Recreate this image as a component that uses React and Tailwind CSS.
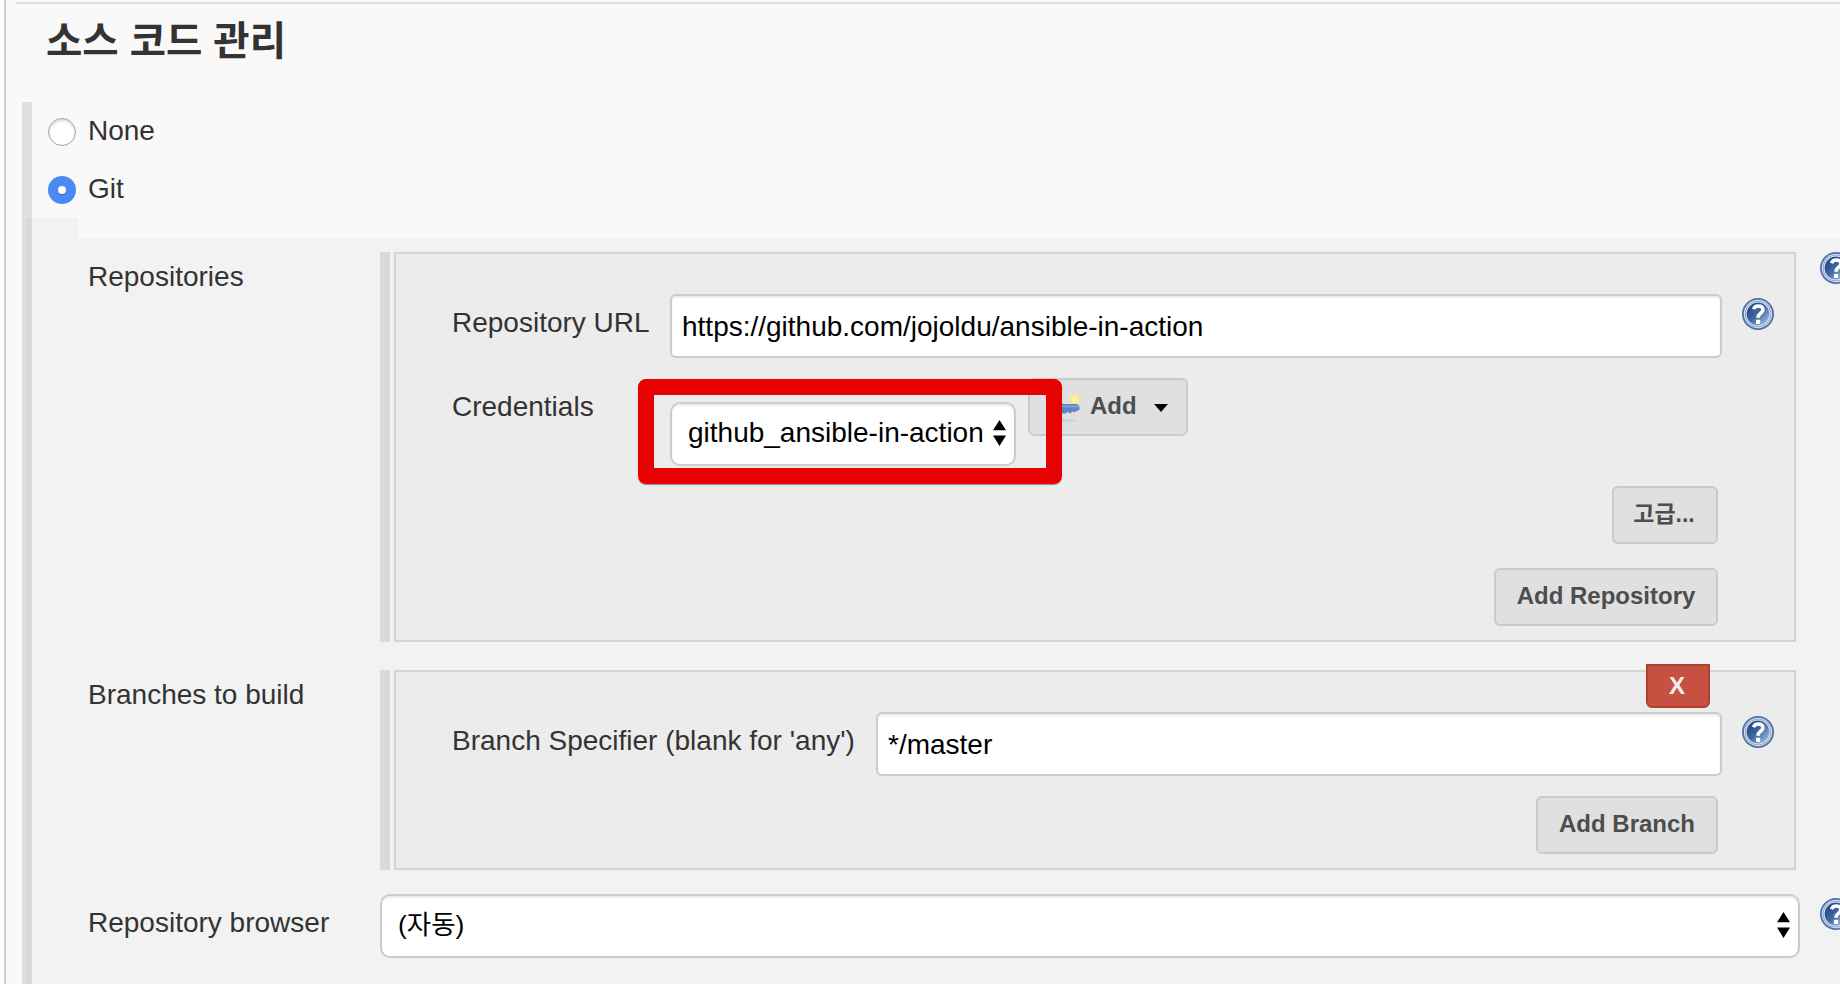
function HelpIcon() {
  return (
    <svg className="size-8 shrink-0" viewBox="0 0 32 32" aria-label="Help">
      <defs>
        <linearGradient id="help-fill" x1="0.1" y1="0.1" x2="0.9" y2="0.9">
          <stop offset="0.15" stopColor="#2a4f8c" />
          <stop offset="0.5" stopColor="#4468a2" />
          <stop offset="1" stopColor="#9db8dc" />
        </linearGradient>
      </defs>
      <circle cx="16" cy="16" r="16" fill="#4f70a6" />
      <circle cx="16" cy="16" r="14.2" fill="#d3deed" />
      <circle cx="16" cy="16" r="13.2" fill="#7f9ac4" />
      <circle cx="16" cy="16" r="12.400" fill="#dfe7f3" />
      <circle cx="16" cy="16" r="11.400" fill="url(#help-fill)" />
      <path d="M11.600 11.200c.8-2.400 2.300-3.200 4.600-3.200 3 0 4.700 1.400 4.700 3.700 0 3.500-4.900 3.500-4.900 8" fill="none" stroke="#fff" strokeWidth="3.600" />
      <rect x="14" y="21.800" width="4.200" height="4.200" fill="#fff" />
    </svg>
  );
}

function Arrows() {
  return (
    <svg className="h-[26px] w-[13px] shrink-0" viewBox="0 0 13 26">
      <path d="M6.500 0 13 10.300H0zM6.500 26 13 15.500H0z" fill="#000" />
    </svg>
  );
}

function Button({ children, className }) {
  return (
    <button className={`flex h-[58px] shrink-0 items-center rounded-md border-2 border-[#cacaca] bg-[#e0e0e0] pb-[3px] font-bold text-[#4d4d4d] ${className}`}>
      {children}
    </button>
  );
}

function Field({ children, className }) {
  return (
    <div className={`flex h-16 shrink-0 items-center border-2 border-[#ccc] bg-white text-black shadow-[inset_0_2px_2px_rgba(0,0,0,0.075)] ${className}`}>
      {children}
    </div>
  );
}

function Panel({ children, className }) {
  return (
    <div className={`flex w-[1416px] shrink-0 gap-1 ${className}`}>
      <div className="w-2.5 shrink-0 bg-[#d9d9d9]" />
      <div className="flex w-[1402px] shrink-0 flex-col border-2 border-[#d3d3d3] bg-[#ececec] pr-5 pl-14">{children}</div>
    </div>
  );
}

export default function App() {
  return (
    <div className="flex h-[984px] w-[1840px] overflow-hidden bg-white pl-1 font-['Liberation_Sans','Noto_Sans_CJK_KR',sans-serif] text-[28px] leading-8 whitespace-nowrap text-[#333]">
      <div className="flex w-[1836px] shrink-0 flex-col border-l-2 border-[#ccc] bg-[#f9f9f9]">
        <div className="mt-0.5 ml-2.5 h-0.5 shrink-0 bg-[#ddd]" />
        <h2 className="mt-3 ml-10 h-[51px] shrink-0 text-[39.5px] leading-[50px] font-bold">소스 코드 관리</h2>
        <div className="mt-[35px] ml-4 flex h-[116px] shrink-0 flex-col border-l-10 border-[#e0e0e0] pl-4">
          <label className="mt-[13px] flex h-8 items-center gap-3">
            <span className="mt-px size-7 rounded-full border border-[#a5a5a5] bg-white shadow-[inset_0_2px_3px_rgba(0,0,0,0.15)]" />
            <span>None</span>
          </label>
          <label className="mt-[26px] flex h-8 items-center gap-3">
            <span className="mt-px flex size-7 items-center justify-center rounded-full bg-[#4b89f5]">
              <span className="size-2 rounded-full bg-white shadow-[0_1px_1px_rgba(0,0,0,0.25)]" />
            </span>
            <span>Git</span>
          </label>
        </div>
        <div className="ml-4 flex h-[766px] shrink-0">
          <div className="w-1 shrink-0 bg-[#e0e0e0]" />
          <div className="w-1.5 shrink-0 bg-[#d9d9d9]" />
          <div className="flex w-[1808px] shrink-0 flex-col overflow-hidden bg-[#f2f2f2]">
            <div className="ml-[46px] h-5 shrink-0 bg-[#f9f9f9]" />
            <div className="mt-3.5 flex pl-14">
              <div className="w-[292px] shrink-0 pt-[9px]">Repositories</div>
              <Panel className="h-[390px]">
                <div className="mt-10 flex">
                  <div className="w-[218px] shrink-0 pt-[13px]">Repository URL</div>
                  <Field className="w-[1052px] rounded-md px-2.5 pt-0.5">https://github.com/jojoldu/ansible-in-action</Field>
                  <div className="mt-1 ml-5"><HelpIcon /></div>
                </div>
                <div className="mt-5 flex">
                  <div className="w-[218px] shrink-0 pt-[13px]">Credentials</div>
                  <div className="relative mt-6 h-16">
                    <Field className="w-[346px] justify-between rounded-[10px] pr-2 pb-0.5 pl-4">
                      <span>github_ansible-in-action</span>
                      <Arrows />
                    </Field>
                    <div className="absolute -top-[23px] -left-8 z-10 h-[105px] w-[424px] rounded-lg border-16 border-[#e60202] shadow-[0_1px_1px_rgba(0,0,0,0.4)]" />
                  </div>
                  <Button className="ml-3 w-40 pl-[19px] text-2xl">
                    <svg className="mt-1 mr-[9px] size-8 shrink-0" viewBox="0 0 32 32">
                      <ellipse cx="15" cy="28.500" rx="13" ry="1.500" fill="#d0d0d0" />
                      <circle cx="25.500" cy="7.500" r="5" fill="#f6ef86" />
                      <circle cx="25.500" cy="7.500" r="2.500" fill="#fbf6a8" />
                      <path d="M2 9h9l3 3h14l2.500 2.500V18l-3 1-2 1.500-2-1-2 2-3-1.500-2 1.500H2z" fill="#5f88c2" />
                      <path d="M11 14.500h18" stroke="#85a8d8" strokeWidth="1.500" />
                    </svg>
                    <span>Add</span>
                    <svg className="mt-1 ml-[17px] h-2 w-3.5" viewBox="0 0 14 8"><path d="M0 0h14L7 8z" fill="#000" /></svg>
                  </Button>
                </div>
                <div className="mt-5 flex flex-col items-end gap-6 pr-14">
                  <Button className="w-[106px] justify-center pr-0.5 text-[23px]">고급...</Button>
                  <Button className="w-56 justify-center text-2xl">Add Repository</Button>
                </div>
              </Panel>
              <div className="ml-6"><HelpIcon /></div>
            </div>
            <div className="mt-7 flex pl-14">
              <div className="w-[292px] shrink-0 pt-[9px]">Branches to build</div>
              <Panel className="relative h-[200px]">
                <button className="absolute -top-1.5 right-[86px] flex h-11 w-16 items-center justify-center rounded-b-md border-2 border-[#b03f30] bg-[#c65140] pr-0.5 text-2xl font-bold text-[#f3eeee]">X</button>
                <div className="mt-10 flex">
                  <div className="w-[424px] shrink-0 pt-[13px]">Branch Specifier (blank for 'any')</div>
                  <Field className="w-[846px] rounded-md px-2.5 pt-0.5">*/master</Field>
                  <div className="mt-1 ml-5"><HelpIcon /></div>
                </div>
                <div className="mt-5 flex justify-end pr-14">
                  <Button className="w-[182px] justify-center text-2xl">Add Branch</Button>
                </div>
              </Panel>
            </div>
            <div className="mt-6 flex pl-14">
              <div className="w-[292px] shrink-0 pt-[13px]">Repository browser</div>
              <Field className="w-[1420px] justify-between rounded-[10px] pr-2 pb-0.5 pl-4">
                <span className="text-[26.5px]">(자동)</span>
                <Arrows />
              </Field>
              <div className="mt-1 ml-5"><HelpIcon /></div>
            </div>
          </div>
        </div>
      </div>
    </div>
  );
}
